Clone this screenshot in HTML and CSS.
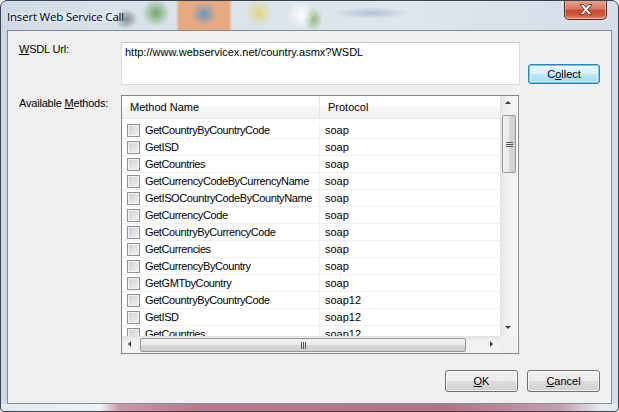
FILE: index.html
```html
<!DOCTYPE html>
<html lang="en">
<head>
  <meta charset="UTF-8">
  <title>Insert Web Service Call</title>
  <link rel="stylesheet" href="styles.css">
</head>
<body>
<div class="window">
  <div class="titlebar">
    <span class="title">Insert Web Service Call</span>
    <button class="close" title="Close">
      <svg width="14" height="11" viewBox="0 0 14 11">
        <path d="M1 0.5h3.5l2.5 3 2.5-3h3.5l-4.2 5 4.2 5h-3.5l-2.5-3-2.5 3h-3.5l4.2-5z" fill="#fff" stroke="#5a1a10" stroke-width="0.8"/>
      </svg>
    </button>
  </div>

  <div class="client">
    <div class="form">
      <label class="label"><u>W</u>SDL Url:</label>
      <div class="url-box">http://www.webservicex.net/country.asmx?WSDL</div>
      <button class="btn btn-default">C<u>o</u>llect</button>

      <label class="label label-methods">Available <u>M</u>ethods:</label>
      <div class="list">
        <div class="list-body">
          <div class="list-header">
            <div class="col col-name">Method Name</div>
            <div class="col col-proto">Protocol</div>
          </div>
          <div class="rows" id="rows">
            <!-- строки добавляются скриптом -->
          </div>
        </div>
        <div class="vscroll">
          <div class="arrow arrow-up"></div>
          <div class="vthumb"><span class="grip"></span></div>
          <div class="vtrack"></div>
          <div class="arrow arrow-down"></div>
        </div>
        <div class="hscroll">
          <div class="arrow arrow-left"></div>
          <div class="hthumb"><span class="grip"></span></div>
          <div class="arrow arrow-right"></div>
        </div>
        <div class="corner"></div>
      </div>
    </div>

    <div class="actions">
      <button class="btn"><u>O</u>K</button>
      <button class="btn"><u>C</u>ancel</button>
    </div>
  </div>
</div>

<script>
  // Список методов сервиса
  const methods = [
    ["GetCountryByCountryCode", "soap"],
    ["GetISD", "soap"],
    ["GetCountries", "soap"],
    ["GetCurrencyCodeByCurrencyName", "soap"],
    ["GetISOCountryCodeByCountyName", "soap"],
    ["GetCurrencyCode", "soap"],
    ["GetCountryByCurrencyCode", "soap"],
    ["GetCurrencies", "soap"],
    ["GetCurrencyByCountry", "soap"],
    ["GetGMTbyCountry", "soap"],
    ["GetCountryByCountryCode", "soap12"],
    ["GetISD", "soap12"],
    ["GetCountries", "soap12"]
  ];

  const rows = document.getElementById('rows');
  methods.forEach(([name, proto]) => {
    const row = document.createElement('div');
    row.className = 'row';
    row.innerHTML = '<div class="col col-name"><span class="check"></span><span class="name"></span></div>' +
                    '<div class="col col-proto"></div>';
    row.querySelector('.name').textContent = name;
    row.querySelector('.col-proto').textContent = proto;
    rows.appendChild(row);
  });
</script>
</body>
</html>
```

FILE: styles.css
```css
body {
  margin: 0;
  background: #ffffff;
  font-family: "Liberation Sans", Arial, sans-serif;
}

.window {
  width: 619px;
  height: 412px;
  box-sizing: border-box;
  border: 1px solid #3b4350;
  border-radius: 7px 7px 4px 4px;
  padding: 0 6px 7px 6px;
  display: flex;
  flex-direction: column;
  overflow: hidden;
  /* размытый фон Aero */
  background:
    linear-gradient(90deg, #e4eaf0 0, #eef2f6 100px, #c89aa6 118px, #b67888 200px, #b27584 450px, #c4a0b0 560px, #e6eaf0 600px) no-repeat left bottom / 100% 7px,
    radial-gradient(ellipse 12px 10px at 125px 18px, rgba(60, 70, 80, 0.6), transparent),
    radial-gradient(ellipse 14px 14px at 155px 12px, rgba(90, 150, 70, 0.8), transparent),
    radial-gradient(ellipse 13px 12px at 203px 13px, rgba(90, 150, 200, 0.9), transparent),
    linear-gradient(90deg, transparent 175px, rgba(235, 160, 110, 0.85) 178px, rgba(235, 160, 110, 0.85) 228px, transparent 231px),
    radial-gradient(ellipse 14px 14px at 258px 12px, rgba(220, 210, 110, 0.8), transparent),
    radial-gradient(ellipse 14px 14px at 300px 14px, rgba(255, 255, 255, 0.95), transparent),
    radial-gradient(ellipse 10px 12px at 312px 18px, rgba(110, 170, 80, 0.7), transparent),
    radial-gradient(ellipse 40px 6px at 370px 12px, rgba(150, 170, 200, 0.6), transparent),
    linear-gradient(90deg, #cdd9e4 0, #d8e2ea 100px, #dfe6ec 400px, #d4dee8 619px);
}

.titlebar {
  height: 29px;
  display: flex;
  align-items: flex-start;
  justify-content: space-between;
  flex-shrink: 0;
}

.title {
  font-family: "Open Sans", "Liberation Sans", sans-serif;
  font-size: 11.5px;
  color: #000;
  margin-top: 8px;
  letter-spacing: -0.2px;
  text-shadow: 0 0 8px #fff, 0 0 4px #fff;
}

.close {
  width: 43px;
  height: 20px;
  margin-top: -1px;
  margin-right: 5px;
  border: 1px solid #5f2620;
  border-top: none;
  border-radius: 0 0 5px 5px;
  background: linear-gradient(#e8a796 0, #d67a66 45%, #c34a30 55%, #d2583c 80%, #e4917a 100%);
  box-shadow: inset 0 0 0 1px rgba(255, 220, 210, 0.5);
  padding: 0;
  display: flex;
  align-items: center;
  justify-content: center;
}

/* Клиентская область диалога */
.client {
  flex: 1;
  background: #f0f0f0;
  border: 1px solid #7f8b98;
  padding: 11px 11px 0 11px;
  display: flex;
  flex-direction: column;
  font-size: 11px;
  color: #000;
}

.form {
  display: grid;
  grid-template-columns: 102px 399px 1fr;
  grid-template-rows: 43px 259px;
  row-gap: 10px;
}

.label {
  padding-top: 1px;
  letter-spacing: -0.2px;
}

.label-methods {
  padding-top: 2px;
}

.url-box {
  background: #fff;
  border: 1px solid #d5dbe0;
  border-top-color: #c5cbd2;
  padding: 3px 3px;
  box-sizing: border-box;
}

.btn {
  font-family: "Liberation Sans", Arial, sans-serif;
  font-size: 11px;
  color: #000;
  width: 73px;
  height: 22px;
  padding: 0;
  border: 1px solid #707070;
  border-radius: 3px;
  background: linear-gradient(#f2f2f2 0, #ebebeb 50%, #dddddd 51%, #cfcfcf 100%);
  box-shadow: inset 0 0 0 1px rgba(255, 255, 255, 0.7);
}

.btn-default {
  align-self: end;
  justify-self: end;
  width: 72px;
  height: 20px;
  margin-bottom: 1px;
  border-color: #3c7fb1;
  background: linear-gradient(#eaf6fd 0, #d9f0fc 50%, #bee6fd 51%, #a7d9f5 100%);
  box-shadow: inset 0 0 0 1px #5ecbf1, inset 0 0 0 2px rgba(255, 255, 255, 0.5);
}

/* Список методов */
.list {
  grid-column: 2 / 3;
  width: 398px;
  box-sizing: border-box;
  border: 1px solid #828790;
  background: #fff;
  display: grid;
  grid-template-columns: 378px 17px;
  grid-template-rows: 240px 17px;
  overflow: hidden;
}

.list-body {
  overflow: hidden;
}

.list-header {
  display: flex;
  height: 22px;
  margin-bottom: 3px;
  background: linear-gradient(#ffffff 0, #ffffff 45%, #f5f6f7 50%, #f0f1f2 100%);
  border-bottom: 1px solid #e5e5e5;
}

.list-header .col {
  line-height: 22px;
  padding-left: 8px;
}

.col-name {
  width: 198px;
  box-sizing: border-box;
  border-right: 1px solid #e3e5e7;
  flex-shrink: 0;
}

.col-proto {
  padding-left: 5px;
}

.row {
  display: flex;
  height: 17px;
  box-sizing: border-box;
  border-bottom: 1px solid #f0f0f0;
}

.row .col {
  line-height: 16px;
  white-space: nowrap;
  overflow: hidden;
}

.row .col-name {
  display: flex;
  align-items: center;
  padding-left: 5px;
  border-right-color: #f0f0f0;
  letter-spacing: -0.4px;
}

.row .col-proto {
  padding-left: 5px;
}

.check {
  width: 11px;
  height: 11px;
  border: 1px solid #8e8f8f;
  background: linear-gradient(135deg, #cbcfd5 0, #e2e4e8 60%, #f4f4f4 100%);
  box-shadow: inset 0 0 0 1px #f4f4f4;
  margin-right: 5px;
  flex-shrink: 0;
}

/* Полосы прокрутки */
.vscroll {
  background: linear-gradient(90deg, #e3e3e3, #f0f0f0 30%, #f3f3f3);
  display: flex;
  flex-direction: column;
}

.arrow {
  width: 17px;
  height: 17px;
  flex-shrink: 0;
  position: relative;
}

.arrow::after {
  content: "";
  position: absolute;
  left: 5px;
  top: 7px;
  border: 3px solid transparent;
}

.arrow-up::after {
  top: 5px;
  border-bottom: 3px solid #404040;
  border-width: 0 3.5px 3px 3.5px;
  left: 5px;
}

.arrow-down::after {
  top: 7px;
  border-top: 3px solid #404040;
  border-width: 3px 3.5px 0 3.5px;
}

.arrow-left::after {
  top: 5px;
  left: 6px;
  border-right: 3px solid #404040;
  border-width: 3.5px 3px 3.5px 0;
}

.arrow-right::after {
  top: 5px;
  left: 8px;
  border-left: 3px solid #404040;
  border-width: 3.5px 0 3.5px 3px;
}

.vthumb {
  height: 56px;
  margin: 2px 1px 0 2px;
  border: 1px solid #979797;
  border-radius: 2px;
  background: linear-gradient(90deg, #f3f3f3 0, #e8e8e8 50%, #d6d6d6 55%, #d0d0d0 100%);
  display: flex;
  align-items: center;
  justify-content: center;
}

.vthumb .grip {
  width: 7px;
  height: 5px;
  background: repeating-linear-gradient(#5a5a5a 0, #5a5a5a 1px, transparent 1px, transparent 2px);
}

.vtrack {
  flex: 1;
}

.hscroll {
  background: linear-gradient(#e3e3e3, #f0f0f0 30%, #f3f3f3);
  display: flex;
}

.hthumb {
  width: 324px;
  margin: 2px 0 1px 1px;
  border: 1px solid #979797;
  border-radius: 2px;
  background: linear-gradient(#f3f3f3 0, #e8e8e8 50%, #d6d6d6 55%, #d0d0d0 100%);
  display: flex;
  align-items: center;
  justify-content: center;
  margin-right: 16px;
}

.hthumb .grip {
  width: 5px;
  height: 7px;
  background: repeating-linear-gradient(90deg, #5a5a5a 0, #5a5a5a 1px, transparent 1px, transparent 2px);
}

.corner {
  background: #f0f0f0;
}

.actions {
  display: flex;
  justify-content: flex-end;
  gap: 9px;
  margin-top: 16px;
}
```
